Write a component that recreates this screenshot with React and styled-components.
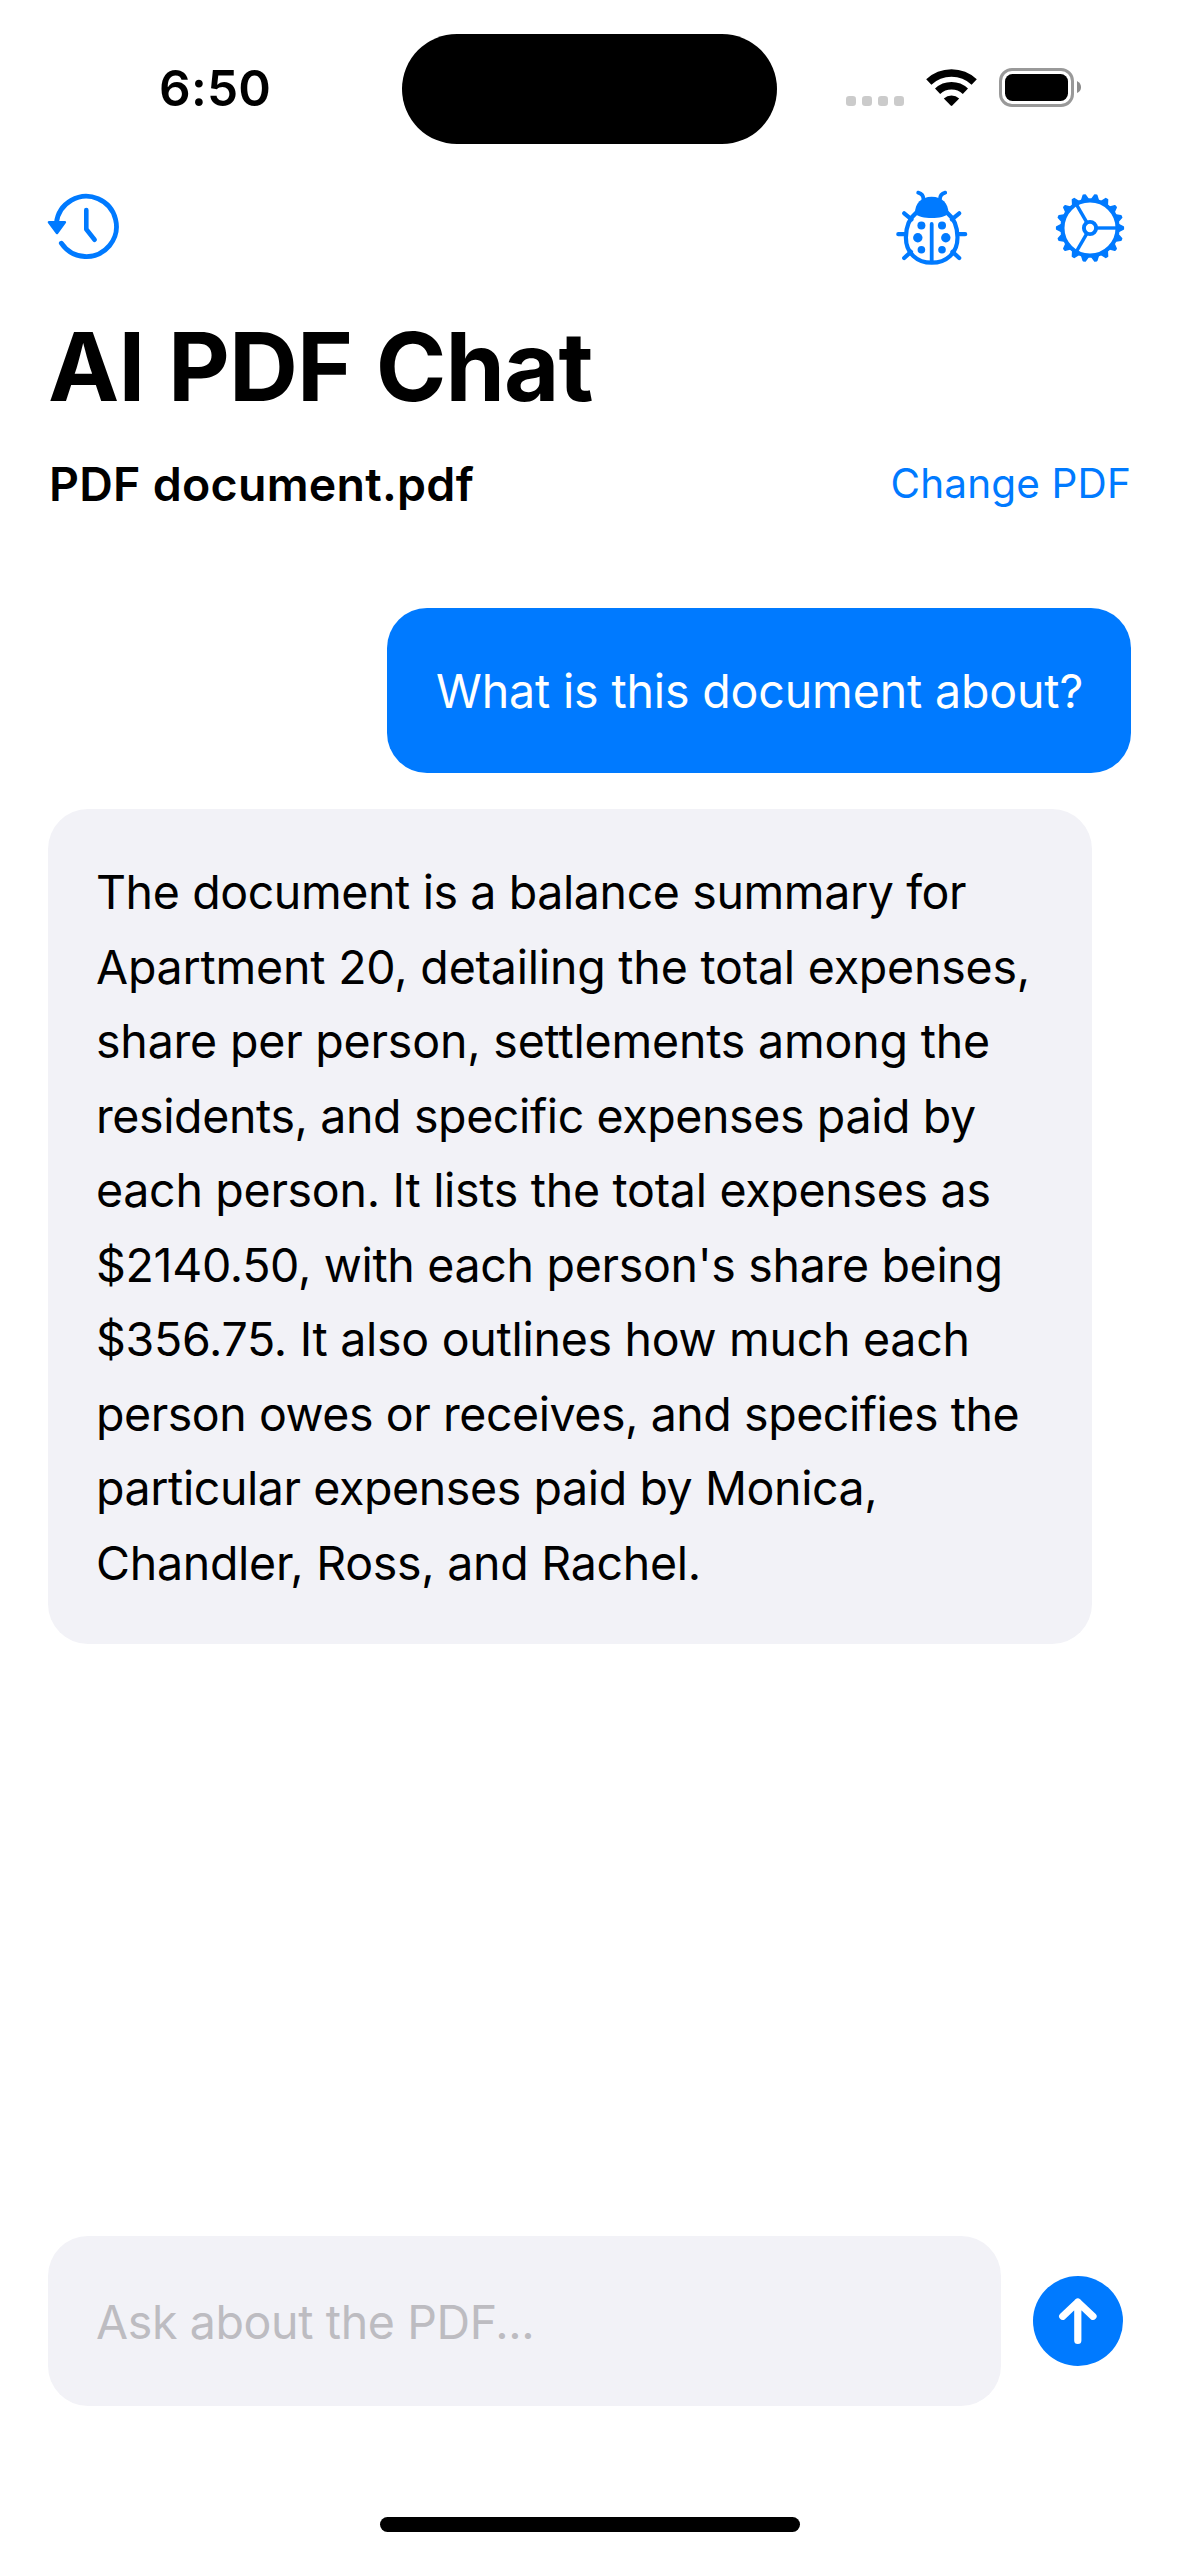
import React from "react";
import styled, { createGlobalStyle } from "styled-components";

const BLUE = "#007aff";
const GRAY = "#f2f2f7";

const GlobalStyle = createGlobalStyle`
  * { box-sizing: border-box; }
  body { margin: 0; background: #fff; }
`;

const Screen = styled.div`
  display: flex;
  flex-direction: column;
  width: 1179px;
  height: 2556px;
  overflow: hidden;
  background: #fff;
  color: #000;
  font-family: Inter, "Liberation Sans", sans-serif;
`;

const StatusBar = styled.header`
  display: grid;
  grid-template-columns: 402px 375px 402px;
  align-items: center;
  flex: none;
  height: 177px;
`;

const Time = styled.div`
  padding: 0 0 2px 159px;
  font-size: 49.5px;
  font-weight: 600;
  line-height: 60px;
  letter-spacing: 0.24px;
`;

const Island = styled.div`
  height: 110px;
  margin-top: 1px;
  border-radius: 55px;
  background: #000;
`;

const StatusIcons = styled.div`
  display: flex;
  gap: 22px;
  padding-left: 69px;

  svg { display: block; }
`;

const NavBar = styled.nav`
  display: flex;
  align-items: center;
  flex: none;
  height: 102px;
  padding: 0 51px 0 47px;
`;

const NavGroup = styled.div`
  display: flex;
  gap: 84px;
  margin-left: auto;
`;

const IconButton = styled.button`
  display: flex;
  padding: 0;
  border: 0;
  background: none;
  color: ${BLUE};
`;

const Title = styled.h1`
  flex: none;
  margin: 27px 48px 0;
  font-size: 95.5px;
  font-weight: 700;
  line-height: 120px;
  letter-spacing: -0.9px;
  word-spacing: 1.9px;
`;

const FileRow = styled.div`
  display: flex;
  align-items: center;
  justify-content: space-between;
  flex: none;
  height: 60px;
  margin: 28px 48px 0 49px;
`;

const FileName = styled.span`
  font-size: 46.5px;
  font-weight: 600;
  letter-spacing: 0.27px;
`;

const ChangeLink = styled.button`
  padding: 0;
  border: 0;
  background: none;
  color: ${BLUE};
  font: 400 40.5px/50px Inter, "Liberation Sans", sans-serif;
  letter-spacing: 0.14px;
`;

const Messages = styled.main`
  display: flex;
  flex-direction: column;
  gap: 36px;
  flex: 1;
  padding: 94px 48px 0;
`;

const Bubble = styled.div`
  align-self: ${(p) => (p.$mine ? "flex-end" : "flex-start")};
  width: ${(p) => (p.$mine ? 744 : 1044)}px;
  padding: ${(p) => (p.$mine ? "46px 0 44.5px 49px" : "46px 0 44px 48px")};
  border-radius: 40px;
  background: ${(p) => (p.$mine ? BLUE : GRAY)};
  color: ${(p) => (p.$mine ? "#fff" : "#000")};
`;

const Line = styled.span`
  display: block;
  font-size: 46.5px;
  line-height: 74.5px;
  letter-spacing: ${(p) => p.$track}px;
  white-space: nowrap;
`;

const Composer = styled.footer`
  display: flex;
  align-items: center;
  gap: 32px;
  flex: none;
  padding: 0 48px;
`;

const Field = styled.div`
  width: 953px;
  height: 170px;
  padding: 49px 0 0 48px;
  border-radius: 40px;
  background: ${GRAY};
  color: #bdbcc1;
`;

const SendButton = styled.button`
  display: flex;
  width: 90px;
  height: 90px;
  padding: 0;
  border: 0;
  border-radius: 50%;
  background: ${BLUE};
`;

const HomeArea = styled.div`
  display: flex;
  justify-content: center;
  align-items: flex-end;
  flex: none;
  height: 150px;
  padding-bottom: 24px;
`;

const HomeIndicator = styled.div`
  width: 420px;
  height: 15px;
  border-radius: 8px;
  background: #000;
`;

const answer = [
  ["The document is a balance summary for", -0.392],
  ["Apartment 20, detailing the total expenses,", -0.2],
  ["share per person, settlements among the", -0.19],
  ["residents, and specific expenses paid by", -0.382],
  ["each person. It lists the total expenses as", -0.288],
  ["$2140.50, with each person's share being", -0.315],
  ["$356.75. It also outlines how much each", -0.28],
  ["person owes or receives, and specifies the", -0.44],
  ["particular expenses paid by Monica,", -0.4],
  ["Chandler, Ross, and Rachel.", -0.279],
];

const SignalIcon = () => (
  <svg width="58" height="41" viewBox="846 68 58 41" fill="#cbcbcb">
    {[846, 862, 878, 894].map((x) => (
      <rect key={x} x={x} y="96" width="10" height="10" rx="3.2" />
    ))}
  </svg>
);

const WifiIcon = () => (
  <svg width="51" height="41" viewBox="926 68 51 41">
    <g fill="none" stroke="#000" strokeWidth="7.6">
      <path d="M928.8 82 A33.2 33.2 0 0 1 974.2 82" />
      <path d="M937.6 91.2 A20.4 20.4 0 0 1 965.4 91.2" />
    </g>
    <path d="M943.8 98.6 A11.2 11.2 0 0 1 959.2 98.6 L952.3 105.6 Q951.5 106.4 950.7 105.6 Z" />
  </svg>
);

const BatteryIcon = () => (
  <svg width="82" height="41" viewBox="999 68 82 41">
    <rect x="1000.5" y="69.5" width="72" height="36" rx="11.5" fill="none" stroke="#999" strokeWidth="3" />
    <rect x="1005" y="74" width="63" height="27" rx="7.5" />
    <path d="M1077 81 Q1081 83 1081 87.3 Q1081 91.5 1077 93 Z" fill="#8c8c8c" />
  </svg>
);

const HistoryIcon = () => (
  <svg width="76" height="80" viewBox="47 188 76 80" fill="none" stroke="currentColor" strokeWidth="4.8" strokeLinecap="round" strokeLinejoin="round">
    <path d="M56.4 223 A30.1 30.1 0 1 1 61.3 243.2" />
    <path d="M86.3 210 V229.3 L94.6 239.8" strokeWidth="4.6" />
    <path d="M49 222.3 H64.8 L57 233 Z" fill="currentColor" strokeWidth="2.6" />
  </svg>
);

const LadybugIcon = () => (
  <svg width="72" height="80" viewBox="896 188 72 80" fill="none" stroke="currentColor" strokeWidth="4.2" strokeLinecap="round">
    <path d="M916.5 212.5 C909 218.5 905.9 228 905.9 237.5 C905.9 253 917 262.7 931.7 262.7 C946.4 262.7 957.5 253 957.5 237.5 C957.5 228 954.4 218.5 946.9 212.5" />
    <path d="M931.7 224 V262" strokeWidth="3.8" />
    <path d="M898.3 234.2 H905 M958.4 234.2 H965.2 M904.2 213.3 L911.5 219.3 M959.2 213.3 L951.9 219.3 M904.2 258 L911 251.8 M959.2 258 L952.4 251.8" />
    <path d="M918.2 192.7 C921.5 193.6 923.5 195.4 923.5 199.5 M945.2 192.7 C941.9 193.6 939.9 195.4 939.9 199.5" strokeWidth="3.8" />
    <path d="M915 213.5 C914.8 203.5 921.3 196.8 931.7 196.8 C942.1 196.8 948.6 203.5 948.4 213.5 C943.5 219.6 919.9 219.6 915 213.5 Z" fill="currentColor" stroke="none" />
    <g fill="currentColor" stroke="none">
      {[[921.4, 225.6, 4], [917.8, 237.7, 4.7], [921.4, 249.8, 3.8], [942, 225.6, 4], [945.8, 237.7, 4.7], [942, 249.8, 3.8]].map(([x, y, r]) => (
        <circle key={`${x}-${y}`} cx={x} cy={y} r={r} />
      ))}
    </g>
  </svg>
);

const GearIcon = () => (
  <svg width="76" height="80" viewBox="-38 -40 76 80" fill="none" stroke="currentColor">
    <circle r="27.6" strokeWidth="4.2" />
    <circle r="6.1" strokeWidth="3.9" />
    {[0, 120, 240].map((a) => (
      <path key={a} d="M7 0 H27" strokeWidth="3.4" transform={`rotate(${a})`} />
    ))}
    {Array.from({ length: 18 }, (_, i) => (
      <path key={i} d="M29 -3.2 L33.3 -1 V1 L29 3.2 Z" fill="currentColor" strokeWidth="1.6" strokeLinejoin="round" transform={`rotate(${i * 20})`} />
    ))}
  </svg>
);

const ArrowUpIcon = () => (
  <svg width="90" height="90" viewBox="0 0 90 90" fill="none" stroke="#fff" strokeWidth="7.2" strokeLinecap="round" strokeLinejoin="round">
    <path d="M44.8 26 V64.5 M29.7 40.3 L44.8 26 L60 40.3" />
  </svg>
);

export default function App() {
  return (
    <>
      <GlobalStyle />
      <Screen>
        <StatusBar>
          <Time>6:50</Time>
          <Island />
          <StatusIcons>
            <SignalIcon />
            <WifiIcon />
            <BatteryIcon />
          </StatusIcons>
        </StatusBar>
        <NavBar>
          <IconButton aria-label="History"><HistoryIcon /></IconButton>
          <NavGroup>
            <IconButton aria-label="Debug"><LadybugIcon /></IconButton>
            <IconButton aria-label="Settings"><GearIcon /></IconButton>
          </NavGroup>
        </NavBar>
        <Title>AI PDF Chat</Title>
        <FileRow>
          <FileName>PDF document.pdf</FileName>
          <ChangeLink>Change PDF</ChangeLink>
        </FileRow>
        <Messages>
          <Bubble $mine>
            <Line $track={-0.148}>What is this document about?</Line>
          </Bubble>
          <Bubble>
            {answer.map(([text, track]) => (
              <Line key={text} $track={track}>{text}</Line>
            ))}
          </Bubble>
        </Messages>
        <Composer>
          <Field><Line $track={-0.369}>Ask about the PDF...</Line></Field>
          <SendButton aria-label="Send"><ArrowUpIcon /></SendButton>
        </Composer>
        <HomeArea><HomeIndicator /></HomeArea>
      </Screen>
    </>
  );
}
